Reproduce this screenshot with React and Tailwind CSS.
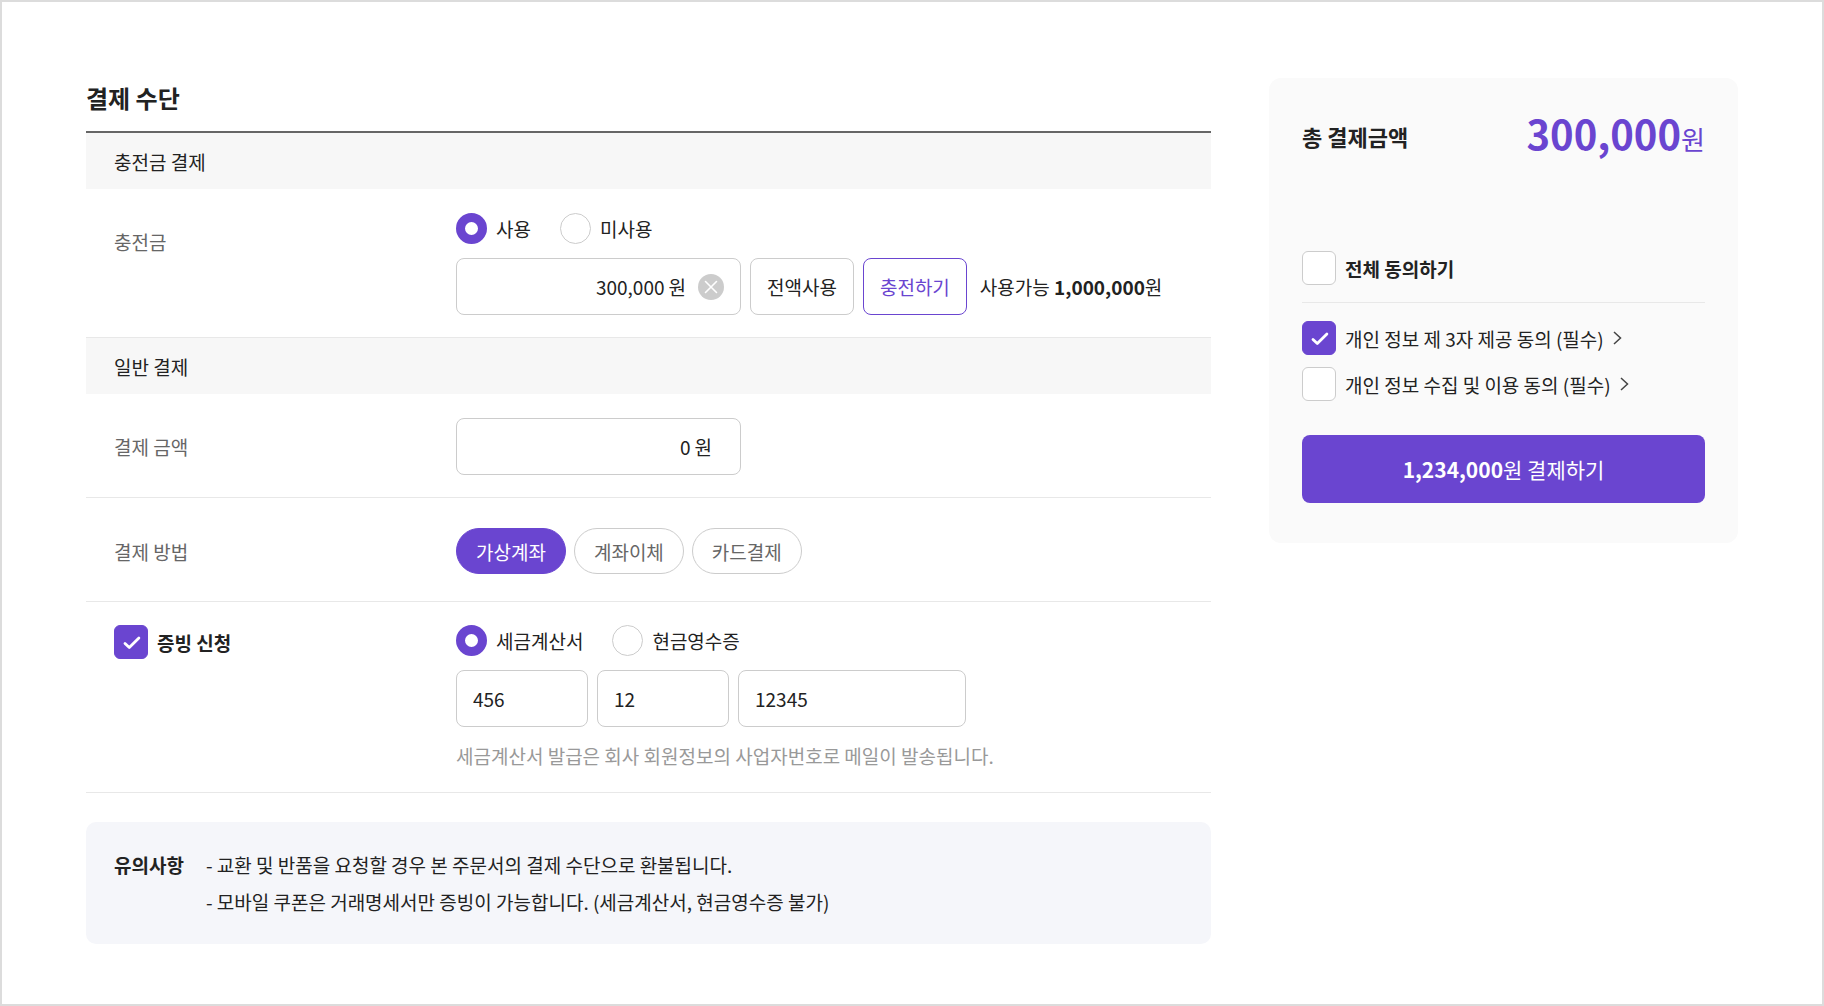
import { useState } from 'react'
import clsx from 'clsx'

const METHODS = ['가상계좌', '계좌이체', '카드결제']

const FIELD = 'h-[57px] rounded-lg border border-[#ccc] bg-white'

function Radio({ name, label, checked, onChange }) {
  return (
    <label className="flex items-center gap-[9px] cursor-pointer">
      <input
        type="radio"
        name={name}
        checked={checked}
        onChange={onChange}
        className="appearance-none w-[31px] h-[31px] rounded-full border border-[#ccc] bg-white checked:border-[9px] checked:border-[#6a45d0]"
      />
      <span>{label}</span>
    </label>
  )
}

function Checkbox({ label, bold, checked, onChange }) {
  return (
    <label className="flex items-center gap-[9px] cursor-pointer">
      <span className="relative flex">
        <input
          type="checkbox"
          checked={checked}
          onChange={onChange}
          className="appearance-none w-[34px] h-[34px] rounded-md border border-[#ccc] bg-white checked:border-[#6a45d0] checked:bg-[#6a45d0]"
        />
        {checked && (
          <svg viewBox="0 0 34 34" className="absolute inset-0 pointer-events-none" fill="none" stroke="#fff" strokeWidth="2.8" strokeLinecap="round" strokeLinejoin="round">
            <path d="M11 18.4l4.3 4.1 9.6-9.6" />
          </svg>
        )}
      </span>
      <span className={clsx(bold && 'font-bold')}>{label}</span>
    </label>
  )
}

function Agreement({ label, checked, onChange }) {
  return (
    <div className="flex items-center gap-2">
      <Checkbox label={label} checked={checked} onChange={onChange} />
      <button type="button" aria-label={`${label} 보기`}>
        <svg width="12" height="16" viewBox="0 0 12 16" fill="none" stroke="#444" strokeWidth="1.5">
          <path d="M2 2l6.5 6L2 14" />
        </svg>
      </button>
    </div>
  )
}

function Band({ children }) {
  return <h3 className="h-14 flex items-center px-7 bg-[#f7f7f7]">{children}</h3>
}

export default function App() {
  const [useCredit, setUseCredit] = useState(true)
  const [credit, setCredit] = useState('300,000')
  const [amount, setAmount] = useState('0')
  const [method, setMethod] = useState(METHODS[0])
  const [proof, setProof] = useState(true)
  const [proofType, setProofType] = useState('tax')
  const [agree, setAgree] = useState([true, false])

  const allAgreed = agree.every(Boolean)
  const toggle = (i) => setAgree(agree.map((v, n) => (n === i ? !v : v)))

  return (
    <div className="min-h-screen border-2 border-[#dcdcdc] bg-white px-[84px] pt-[76px] pb-14 flex items-start gap-[58px] text-[19px] leading-[29px] text-[#222] font-['Noto_Sans_CJK_KR','Noto_Sans',sans-serif]">

      {/* Payment form */}
      <main className="flex-1 min-w-0">
        <h2 className="text-2xl leading-10 font-bold pb-[13px] border-b-2 border-[#666]">결제 수단</h2>

        <Band>충전금 결제</Band>
        <div className="flex pt-6 pb-[22px] pl-7 border-b border-[#e8e8e8]">
          <label htmlFor="credit" className="w-[342px] shrink-0 leading-[57px] text-[#666]">충전금</label>
          <div className="flex flex-col gap-3.5">
            <div className="flex gap-[29px]">
              <Radio name="credit-use" label="사용" checked={useCredit} onChange={() => setUseCredit(true)} />
              <Radio name="credit-use" label="미사용" checked={!useCredit} onChange={() => setUseCredit(false)} />
            </div>
            <div className="flex items-center gap-[9px]">
              <div className={clsx(FIELD, 'w-[285px] flex items-center gap-1 pl-4 pr-4')}>
                <input
                  id="credit"
                  value={credit}
                  onChange={(e) => setCredit(e.target.value)}
                  className="flex-1 min-w-0 text-right outline-none"
                />
                <span>원</span>
                <button type="button" aria-label="지우기" onClick={() => setCredit('')} className="ml-2">
                  <svg width="26" height="26" viewBox="0 0 26 26">
                    <circle cx="13" cy="13" r="13" fill="#ccc" />
                    <path d="M7.5 7.5l11 11M18.5 7.5l-11 11" stroke="#fff" strokeWidth="1.6" strokeLinecap="round" />
                  </svg>
                </button>
              </div>
              <button type="button" onClick={() => setCredit('1,000,000')} className={clsx(FIELD, 'px-4')}>전액사용</button>
              <button type="button" className="h-[57px] px-4 rounded-lg border border-[#6a45d0] bg-white text-[#6a45d0]">충전하기</button>
              <p className="ml-1">사용가능 <b>1,000,000</b>원</p>
            </div>
          </div>
        </div>

        <Band>일반 결제</Band>
        <div className="flex pt-6 pb-[22px] pl-7 border-b border-[#e8e8e8]">
          <label htmlFor="amount" className="w-[342px] shrink-0 leading-[57px] text-[#666]">결제 금액</label>
          <div className={clsx(FIELD, 'w-[285px] flex items-center gap-1 pl-4 pr-7')}>
            <input
              id="amount"
              value={amount}
              onChange={(e) => setAmount(e.target.value)}
              className="flex-1 min-w-0 text-right outline-none"
            />
            <span>원</span>
          </div>
        </div>

        <div className="flex items-center pt-[30px] pb-[27px] pl-7 border-b border-[#e8e8e8]">
          <span className="w-[342px] shrink-0 text-[#666]">결제 방법</span>
          <div className="flex gap-2">
            {METHODS.map((m) => (
              <button
                key={m}
                type="button"
                onClick={() => setMethod(m)}
                className={clsx(
                  'h-[46px] px-[19px] rounded-full border',
                  m === method ? 'border-[#6a45d0] bg-[#6a45d0] text-white' : 'border-[#ccc] bg-white text-[#666]'
                )}
              >
                {m}
              </button>
            ))}
          </div>
        </div>

        <div className="flex items-start pt-[23px] pb-[22px] pl-7 border-b border-[#e8e8e8]">
          <div className="w-[342px] shrink-0">
            <Checkbox label="증빙 신청" bold checked={proof} onChange={() => setProof(!proof)} />
          </div>
          <div className="flex flex-col gap-3.5">
            <div className="flex gap-[29px]">
              <Radio name="proof" label="세금계산서" checked={proofType === 'tax'} onChange={() => setProofType('tax')} />
              <Radio name="proof" label="현금영수증" checked={proofType === 'cash'} onChange={() => setProofType('cash')} />
            </div>
            <div className="flex gap-[9px]">
              <input aria-label="사업자번호 앞자리" defaultValue="456" className={clsx(FIELD, 'w-[132px] px-4')} />
              <input aria-label="사업자번호 가운데자리" defaultValue="12" className={clsx(FIELD, 'w-[132px] px-4')} />
              <input aria-label="사업자번호 뒷자리" defaultValue="12345" className={clsx(FIELD, 'w-[228px] px-4')} />
            </div>
            <p className="text-[#999]">세금계산서 발급은 회사 회원정보의 사업자번호로 메일이 발송됩니다.</p>
          </div>
        </div>

        {/* Notice */}
        <div className="mt-[29px] flex gap-[22px] px-7 py-6 rounded-[10px] bg-[#f5f6fa] leading-[37px]">
          <strong className="shrink-0">유의사항</strong>
          <ul>
            <li>- 교환 및 반품을 요청할 경우 본 주문서의 결제 수단으로 환불됩니다.</li>
            <li>- 모바일 쿠폰은 거래명세서만 증빙이 가능합니다. (세금계산서, 현금영수증 불가)</li>
          </ul>
        </div>
      </main>

      {/* Order summary */}
      <aside className="w-[469px] shrink-0 px-[33px] pt-[26px] pb-10 rounded-xl bg-[#fafafa]">
        <div className="flex items-center justify-between">
          <h2 className="text-[22px] font-bold">총 결제금액</h2>
          <p className="text-[26px] leading-[58px] text-[#6a45d0]">
            <b className="text-[40px]">300,000</b>원
          </p>
        </div>

        <div className="mt-[83px] pb-[17px] border-b border-[#e8e8e8]">
          <Checkbox label="전체 동의하기" bold checked={allAgreed} onChange={() => setAgree([!allAgreed, !allAgreed])} />
        </div>
        <div className="flex flex-col gap-3 pt-[18px]">
          <Agreement label="개인 정보 제 3자 제공 동의 (필수)" checked={agree[0]} onChange={() => toggle(0)} />
          <Agreement label="개인 정보 수집 및 이용 동의 (필수)" checked={agree[1]} onChange={() => toggle(1)} />
        </div>

        <button type="button" className="mt-[34px] w-full h-[68px] rounded-lg bg-[#6a45d0] text-white text-[21px]">
          <b>1,234,000</b>원 결제하기
        </button>
      </aside>

    </div>
  )
}
